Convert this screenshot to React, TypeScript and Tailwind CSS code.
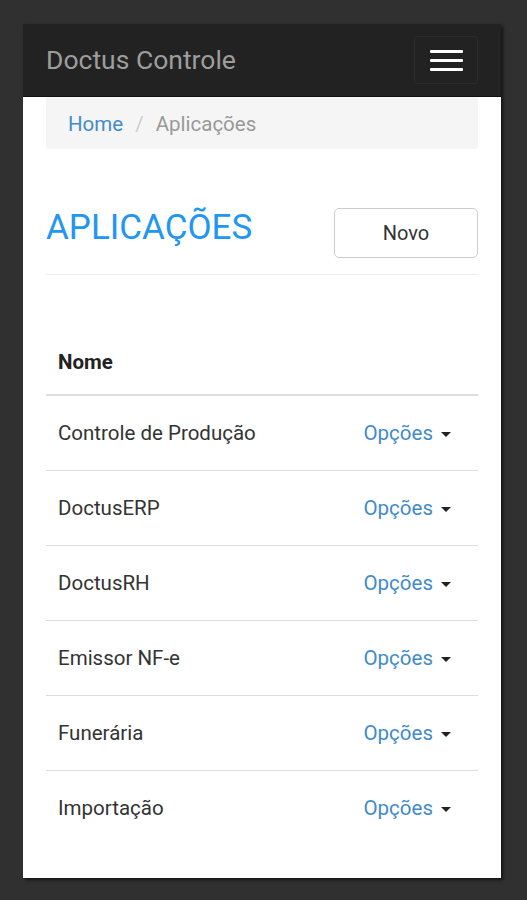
const apps = [
  'Controle de Produção',
  'DoctusERP',
  'DoctusRH',
  'Emissor NF-e',
  'Funerária',
  'Importação',
]

export default function App() {
  return (
    <div
      className="h-[900px] bg-[#303030] pt-[24px] pl-[23px]"
      style={{ fontFamily: 'Roboto, "Noto Sans", sans-serif' }}
    >
      <div className="w-[478px] shadow-[2px_2px_3px_rgba(0,0,0,0.6)]">
        <nav className="h-[73px] bg-[#222222] flex items-center justify-between pl-[23px] pr-[23px] border-b border-[#111]">
          <span className="text-[26.5px] text-[#9d9d9d] leading-none">Doctus Controle</span>
          <button className="w-[64px] h-[48px] rounded-[4px] border border-[#2c2c2c] flex flex-col items-center justify-center gap-[6px]">
            <span className="block w-[33px] h-[3px] bg-white rounded-[1px]" />
            <span className="block w-[33px] h-[3px] bg-white rounded-[1px]" />
            <span className="block w-[33px] h-[3px] bg-white rounded-[1px]" />
          </button>
        </nav>
        <div className="h-[781px] bg-white px-[23px]">
          <div className="h-[52px] bg-[#f5f5f5] rounded-b-[4px] flex items-center pl-[22px] pt-[2px] text-[20.5px]">
            <a className="text-[#428bca]">Home</a>
            <span className="text-[#ccc] px-[12px]">/</span>
            <span className="text-[#999]">Aplicações</span>
          </div>
          <div className="flex items-center justify-between mt-[59px]">
            <h1 className="text-[35px] text-[#2196f3] leading-none -mt-[12px]">APLICAÇÕES</h1>
            <button className="w-[144px] h-[50px] border border-[#cccccc] rounded-[5px] text-[20px] text-[#333]">
              Novo
            </button>
          </div>
          <div className="h-px bg-[#eeeeee] mt-[16px]" />
          <div className="h-[64px]" />
          <div className="h-[46px] flex items-center pl-[12px] border-b-2 border-[#dddddd] pb-[9px] box-content">
            <span className="text-[20.5px] font-bold text-[#222]">Nome</span>
          </div>
          {apps.map((name, i) => (
            <div
              key={name}
              className={`h-[75px] flex items-center justify-between pl-[12px] pr-[27px] text-[20.5px] ${
                i < apps.length - 1 ? 'border-b border-[#dddddd]' : ''
              }`}
            >
              <span className="text-[#333]">{name}</span>
              <span className="flex items-center text-[#428bca]">
                Opções
                <span className="ml-[8px] mt-[2px] w-0 h-0 border-l-[5px] border-r-[5px] border-t-[5px] border-l-transparent border-r-transparent border-t-[#222]" />
              </span>
            </div>
          ))}
        </div>
      </div>
    </div>
  )
}
